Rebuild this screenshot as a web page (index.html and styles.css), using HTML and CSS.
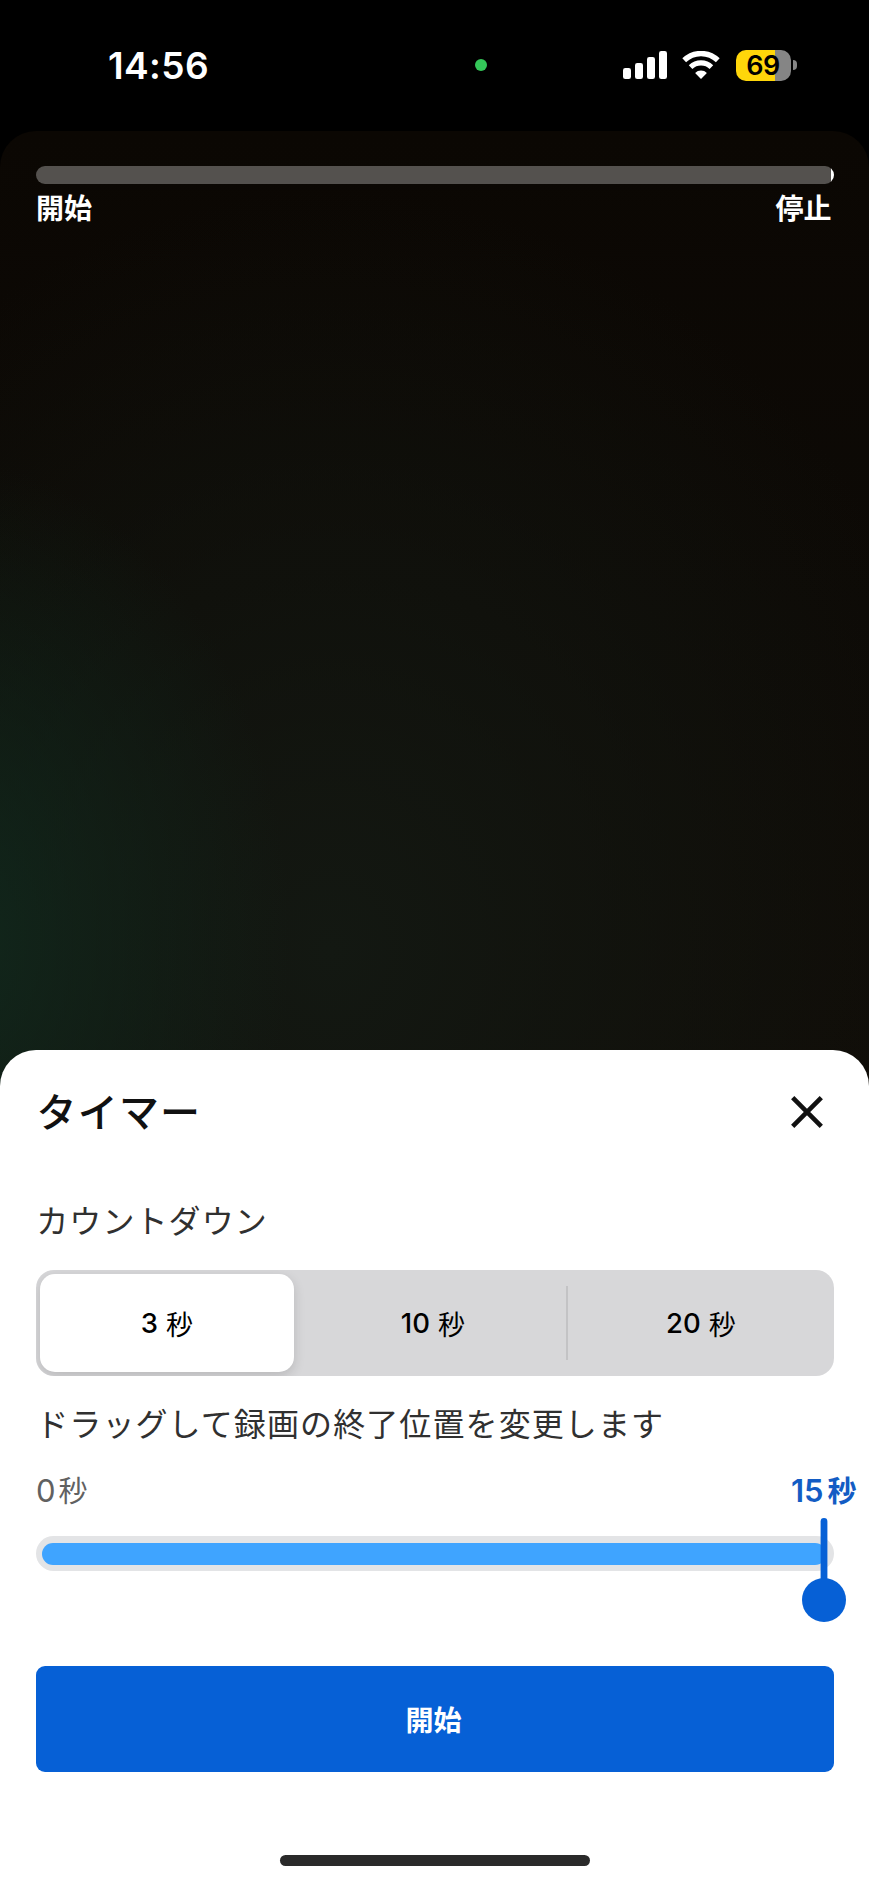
FILE: index.html
```html
<!DOCTYPE html>
<html lang="ja">
<head>
<meta charset="utf-8">
<title>タイマー</title>
<link rel="stylesheet" href="styles.css">
</head>
<body>
<div class="phone">
  <header class="status">
    <time class="clock">14:56</time>
    <i class="camera-dot"></i>
    <div class="indicators">
      <svg class="signal" width="44" height="28" viewBox="0 0 44 28" fill="#fff">
        <rect x="0" y="17" width="8" height="11" rx="2.3"/>
        <rect x="12" y="12" width="8" height="16" rx="2.3"/>
        <rect x="24" y="6" width="8" height="22" rx="2.3"/>
        <rect x="36" y="0" width="8" height="28" rx="2.3"/>
      </svg>
      <svg class="wifi" width="38" height="28" viewBox="0 0 38 28" fill="none">
        <path d="M2.2 9.3a24.2 24.2 0 0 1 33.6 0" stroke="#fff" stroke-width="5.4"/>
        <path d="M8.6 16.1a15 15 0 0 1 20.8 0" stroke="#fff" stroke-width="5.2"/>
        <path d="M19 28l-5.9-6.1a8.6 8.6 0 0 1 11.8 0z" fill="#fff"/>
      </svg>
      <div class="battery"><span class="battery-body">69</span><i class="battery-cap"></i></div>
    </div>
  </header>

  <main class="camera">
    <div class="progress"></div>
    <div class="progress-labels"><span>開始</span><span>停止</span></div>
  </main>

  <section class="sheet">
    <div class="sheet-head">
      <h1 class="title">タイマー</h1>
      <svg class="close" width="32" height="32" viewBox="0 0 32 32" fill="none" stroke="#111" stroke-width="4.6"><path d="M1.7 1.7l28.6 28.6M30.3 1.7L1.7 30.3"/></svg>
    </div>
    <p class="label">カウントダウン</p>
    <div class="segments">
      <div class="segment selected">3 <span class="unit">秒</span></div>
      <div class="segment middle">10 <span class="unit">秒</span></div>
      <div class="segment divided">20 <span class="unit">秒</span></div>
    </div>
    <p class="label hint">ドラッグして録画の終了位置を変更します</p>
    <div class="range-labels">
      <span class="range-start">0<span class="unit">秒</span></span>
      <span class="range-end">15<span class="unit">秒</span></span>
    </div>
    <div class="track">
      <div class="fill"></div>
      <svg class="handle" width="44" height="104" viewBox="0 0 44 104" fill="#0660d6"><rect x="18.6" y="0" width="6.8" height="70" rx="3.4"/><circle cx="22" cy="82" r="22"/></svg>
    </div>
    <button class="start">開始</button>
    <div class="home"></div>
  </section>
</div>
</body>
</html>
```
FILE: styles.css
```css
* { box-sizing: border-box; margin: 0; padding: 0; }
body { background: #000; font-family: Inter, "Noto Sans CJK JP", sans-serif; }
.phone { width: 869px; height: 1884px; display: flex; flex-direction: column; overflow: hidden; background: #000; }

.status { height: 131px; flex: none; display: flex; align-items: flex-start; padding: 49px 72px 0 108px; }
.clock { width: 367px; color: #fff; font-size: 37px; line-height: 33px; font-weight: 600; letter-spacing: 0.4px; }
.camera-dot { width: 12px; height: 12px; margin-top: 10px; border-radius: 50%; background: #34c759; }
.indicators { display: flex; align-items: center; height: 32px; margin-left: auto; }
.wifi { margin-left: 15px; }
.battery { display: flex; align-items: center; margin-left: 16px; gap: 2px; }
.battery-body { width: 55px; height: 31px; padding-right: 1px; border-radius: 10px; background: linear-gradient(90deg, #ffd60a 39px, #858585 39px); color: #000; font-size: 27px; line-height: 31px; font-weight: 600; text-align: center; letter-spacing: -0.5px; }
.battery-cap { width: 4px; height: 10px; border-radius: 0 5px 5px 0; background: #858585; }

.camera {
  height: 955px; flex: none; margin-bottom: -36px; padding: 35px 35.5px 0; border-radius: 36px 36px 0 0;
  background:
    radial-gradient(ellipse 340px 480px at -50px 810px, rgba(17, 42, 30, .9), rgba(17, 42, 30, 0)),
    radial-gradient(ellipse 660px 760px at 330px 820px, #131812, rgba(19, 24, 18, 0)),
    linear-gradient(#0b0703, #0d0a06 50%, #100c07);
}
.progress { height: 18px; border-radius: 9px; background: linear-gradient(90deg, #54514e 795px, #fff 795px); }
.progress-labels { display: flex; justify-content: space-between; padding: 0 2px 0 0.5px; color: #fff; font-size: 28px; line-height: 40px; font-weight: 700; margin-top: 5px; }

.sheet { position: relative; height: 834px; flex: none; border-radius: 36px 36px 0 0; background: #fff; padding: 39px 35.5px 0; }
.sheet-head { display: flex; justify-content: space-between; align-items: center; height: 48px; padding: 0 11px 0 1px; }
.title { font-size: 40px; line-height: 48px; font-weight: 500; letter-spacing: 1.2px; color: #111; }
.close { margin-top: -2px; }
.label { margin-top: 65px; height: 40px; padding-left: 0.7px; font-size: 32px; line-height: 40px; letter-spacing: 1.1px; color: #303030; white-space: nowrap; }
.segments { margin-top: 28px; height: 106px; display: grid; grid-template-columns: 254px 272px 1fr; padding: 4px 0 4px 4px; border-radius: 18px; background: #d7d7d9; overflow: hidden; }
.segment { display: flex; align-items: center; justify-content: center; white-space: pre; color: #000; font-size: 27.5px; font-weight: 500; letter-spacing: 0.3px; }
.segment .unit { font-size: 27px; font-weight: 400; }
.selected { padding-left: 1px; background: #fff; border-radius: 15px; box-shadow: 0 4px 12px rgba(0, 0, 0, .14); }
.middle { padding-left: 7px; }
.divided { padding-left: 3px; background: linear-gradient(#c3c3c5, #c3c3c5) 0 50% / 2px 74px no-repeat; }
.label.hint { margin-top: 29px; }
.range-labels { display: flex; justify-content: space-between; align-items: baseline; height: 40px; margin: 26px -23px 0 0.5px; font-size: 31px; line-height: 40px; }
.range-labels .unit { font-size: 29px; margin-left: 4px; }
.range-start { color: #616161; letter-spacing: -1px; }
.range-end { color: #135cc4; font-weight: 600; }
.track { position: relative; height: 35px; margin-top: 25px; padding: 6.5px 8px 6.5px 6px; border-radius: 18px; background: #e3e4e6; }
.fill { height: 22px; border-radius: 11px; background: #3fa4ff; }
.handle { position: absolute; right: -12.5px; top: -18px; }
.start { display: block; width: 100%; height: 106px; margin-top: 95px; padding-right: 2px; border: 0; border-radius: 9px; background: #0660d6; color: #fff; font-family: "Noto Sans CJK JP", sans-serif; font-size: 28px; line-height: 40px; font-weight: 700; }
.home { width: 310px; height: 11px; margin: 83px auto 0; border-radius: 6px; background: #2a2a2a; }
```
